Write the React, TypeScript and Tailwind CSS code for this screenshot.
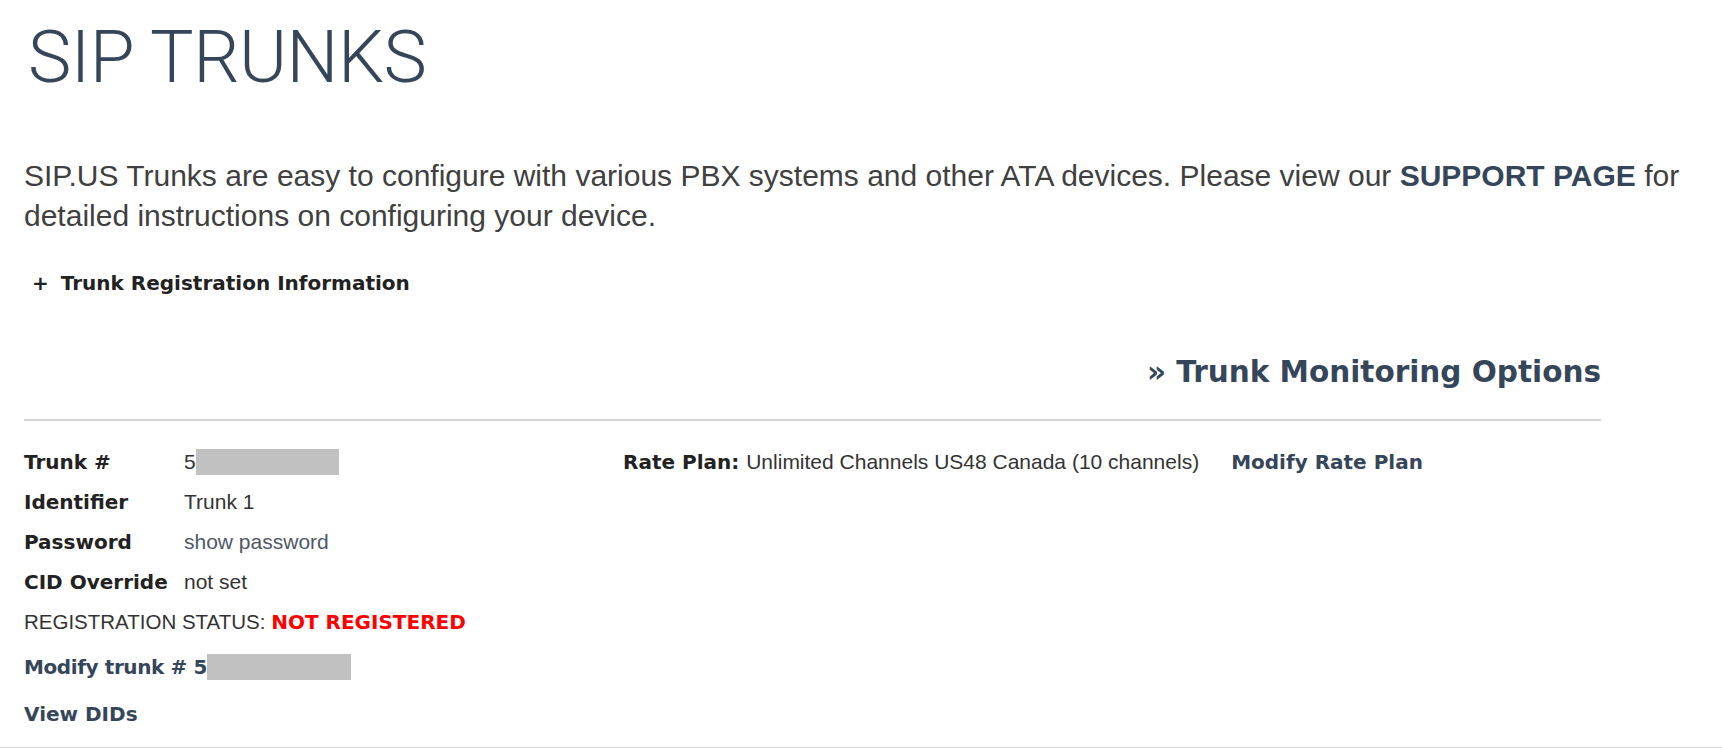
import React from "react";

const bold = "font-['DejaVu_Sans',sans-serif] font-bold";
const reg = "font-['Liberation_Sans',Arial,sans-serif]";

function Redact({ w }: { w: number }) {
  return <span className="inline-block h-[26px] bg-[#c1c1c1] align-middle" style={{ width: w }} />;
}

export default function App() {
  return (
    <div className="w-[1722px] h-[748px] bg-white border-b border-[#dcdcdc] overflow-hidden">
      <div className="pl-[24px]">
        <h1 className="mt-[21px] ml-[4px] text-[73px] leading-[73px] font-light tracking-[-0.5px] text-[#36465a] font-['Roboto',sans-serif]">
          SIP TRUNKS
        </h1>
        <p className="mt-[62px] text-[30px] leading-[40px] text-[#404040] font-['Liberation_Sans',Arial,sans-serif] whitespace-nowrap">
          SIP.US Trunks are easy to configure with various PBX systems and other ATA devices. Please view our{" "}
          <span className="font-bold text-[#36465a]">SUPPORT PAGE</span> for
          <br />
          detailed instructions on configuring your device.
        </p>
        <div className={`mt-[32px] ml-[8px] h-[30px] flex items-center text-[20px] text-[#222] ${bold}`}>
          <span className="mr-[12px]">+</span>
          <span>Trunk Registration Information</span>
        </div>
        <div className="w-[1577px]">
          <div className={`mt-[54px] h-[40px] flex items-center justify-end text-[29.5px] text-[#36465a] ${bold}`}>
            » Trunk Monitoring Options
          </div>
          <div className="mt-[27px] h-[2px] bg-[#d4d4d4]" />
          <div className="mt-[21px] flex text-[20px]">
            <div className="w-[599px]">
              <div className="h-[40px] flex items-center">
                <span className={`w-[160px] text-[#222] ${bold}`}>Trunk #</span>
                <span className={`text-[21px] text-[#333] ${reg}`}>5</span>
                <Redact w={143} />
              </div>
              <div className="h-[40px] flex items-center">
                <span className={`w-[160px] text-[#222] ${bold}`}>Identifier</span>
                <span className={`text-[21px] text-[#333] ${reg}`}>Trunk 1</span>
              </div>
              <div className="h-[40px] flex items-center">
                <span className={`w-[160px] text-[#222] ${bold}`}>Password</span>
                <span className={`text-[21px] text-[#4f5866] ${reg}`}>show password</span>
              </div>
              <div className="h-[40px] flex items-center">
                <span className={`w-[160px] text-[#222] ${bold}`}>CID Override</span>
                <span className={`text-[21px] text-[#333] ${reg}`}>not set</span>
              </div>
              <div className="h-[40px] flex items-center">
                <span className={`text-[20.5px] text-[#333] ${reg}`}>REGISTRATION STATUS:&nbsp;</span>
                <span className={`text-[#ff0000] ${bold}`}>NOT REGISTERED</span>
              </div>
              <div className="mt-[5px] h-[40px] flex items-center">
                <span className={`text-[#36465a] tracking-[-0.4px] ${bold}`}>Modify trunk # 5</span>
                <Redact w={144} />
              </div>
              <div className="mt-[7px] h-[40px] flex items-center">
                <span className={`text-[#36465a] ${bold}`}>View DIDs</span>
              </div>
            </div>
            <div className="h-[40px] flex items-center">
              <span className={`text-[#222] ${bold}`}>Rate Plan:&nbsp;</span>
              <span className={`text-[21px] text-[#333] ${reg}`}>Unlimited Channels US48 Canada (10 channels)</span>
              <span className={`ml-[32px] text-[#36465a] ${bold}`}>Modify Rate Plan</span>
            </div>
          </div>
        </div>
      </div>
    </div>
  );
}
